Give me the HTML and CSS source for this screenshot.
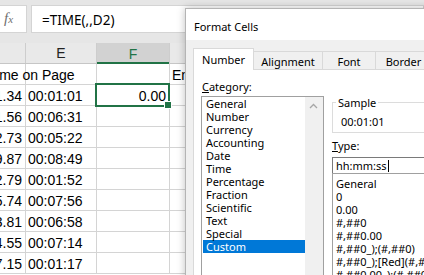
FILE: index.html
```html
<!DOCTYPE html>
<html lang="en">
<head>
<meta charset="UTF-8">
<title>Format Cells</title>
<link rel="stylesheet" href="styles.css">
</head>
<body>
<div class="formula-bar">
  <div class="fx-box"><span class="fx-f">f</span><span class="fx-x">x</span></div>
  <div class="formula-input">=TIME(,,D2)</div>
</div>

<div class="sheet">
  <div class="row col-heads">
    <div class="cell"></div>
    <div class="cell">E</div>
    <div class="cell col-selected">F</div>
    <div class="cell"></div>
  </div>
  <div class="row">
    <div class="cell">Time on Page</div>
    <div class="cell"></div>
    <div class="cell"></div>
    <div class="cell">Engagement</div>
  </div>
  <div class="row">
    <div class="cell num">31.34</div>
    <div class="cell">00:01:01</div>
    <div class="cell num active">0.00</div>
    <div class="cell"></div>
  </div>
  <div class="row">
    <div class="cell num">51.56</div>
    <div class="cell">00:06:31</div>
    <div class="cell"></div>
    <div class="cell"></div>
  </div>
  <div class="row">
    <div class="cell num">42.73</div>
    <div class="cell">00:05:22</div>
    <div class="cell"></div>
    <div class="cell"></div>
  </div>
  <div class="row">
    <div class="cell num">29.87</div>
    <div class="cell">00:08:49</div>
    <div class="cell"></div>
    <div class="cell"></div>
  </div>
  <div class="row">
    <div class="cell num">12.79</div>
    <div class="cell">00:01:52</div>
    <div class="cell"></div>
    <div class="cell"></div>
  </div>
  <div class="row">
    <div class="cell num">65.74</div>
    <div class="cell">00:07:56</div>
    <div class="cell"></div>
    <div class="cell"></div>
  </div>
  <div class="row">
    <div class="cell num">53.81</div>
    <div class="cell">00:06:58</div>
    <div class="cell"></div>
    <div class="cell"></div>
  </div>
  <div class="row">
    <div class="cell num">24.55</div>
    <div class="cell">00:07:14</div>
    <div class="cell"></div>
    <div class="cell"></div>
  </div>
  <div class="row">
    <div class="cell num">17.15</div>
    <div class="cell">00:01:17</div>
    <div class="cell"></div>
    <div class="cell"></div>
  </div>
</div>

<div class="dialog">
  <div class="title-bar">Format Cells</div>
  <div class="dialog-body">
    <div class="tabs">
      <div class="tab tab-active">Number</div>
      <div class="tab tab-align">Alignment</div>
      <div class="tab tab-font">Font</div>
      <div class="tab tab-border">Border</div>
    </div>
    <div class="tab-panel">
      <div class="category">
        <div class="field-label"><u>C</u>ategory:</div>
        <div class="listbox">
          <ul class="list-items">
            <li>General</li>
            <li>Number</li>
            <li>Currency</li>
            <li>Accounting</li>
            <li>Date</li>
            <li>Time</li>
            <li>Percentage</li>
            <li>Fraction</li>
            <li>Scientific</li>
            <li>Text</li>
            <li>Special</li>
            <li class="selected">Custom</li>
          </ul>
          <div class="scrollbar">
            <svg class="arrow-up" width="9" height="6" viewBox="0 0 9 6">
              <polyline points="1,5 4.5,1.5 8,5" fill="none" stroke="#a6a6a6" stroke-width="1.3"/>
            </svg>
          </div>
        </div>
      </div>

      <div class="format-side">
        <fieldset class="sample">
          <legend>Sample</legend>
          <div class="sample-value">00:01:01</div>
        </fieldset>
        <div class="field-label type-label"><u>T</u>ype:</div>
        <div class="type-input">hh:mm:ss<span class="caret"></span></div>
        <ul class="type-list">
          <li>General</li>
          <li>0</li>
          <li>0.00</li>
          <li>#,##0</li>
          <li>#,##0.00</li>
          <li>#,##0_);(#,##0)</li>
          <li>#,##0_);[Red](#,##0)</li>
          <li>#,##0.00_);(#,##0.00)</li>
        </ul>
      </div>
    </div>
  </div>
</div>
</body>
</html>
```

FILE: styles.css
```css
* {
  box-sizing: border-box;
}

body {
  margin: 0;
  width: 424px;
  height: 275px;
  overflow: hidden;
  position: relative;
  background-color: #fff;
  font-family: "Liberation Sans", Arial, sans-serif;
  color: #000;
}

/* formula bar */

.formula-bar {
  display: flex;
  height: 43px;
  padding: 5px 0 10px;
  background-color: #e6e6e6;
}

.fx-box {
  width: 28px;
  margin-left: -1px;
  background-color: #fff;
  border: 1px solid #d4d4d4;
  padding: 3px 0 0 4px;
  color: #6f6f6f;
  font-family: "Liberation Serif", serif;
  font-style: italic;
}

.fx-f {
  font-size: 15px;
}

.fx-x {
  font-size: 11px;
}

.formula-input {
  flex: 1;
  margin-left: 4px;
  background-color: #fff;
  border: 1px solid #d4d4d4;
  padding: 4px 0 0 10px;
  font-family: "Noto Sans", sans-serif;
  font-size: 13.5px;
  line-height: 20px;
}

/* sheet grid */

.sheet {
  margin-left: -14px;
}

.row {
  display: grid;
  grid-template-columns: 40px 71px 73px 1fr;
  height: 21px;
  border-bottom: 1px solid #d4d4d4;
}

.cell {
  display: flex;
  align-items: flex-end;
  padding: 0 2px 1px;
  border-right: 1px solid #d4d4d4;
  white-space: nowrap;
  min-width: 0;
  font-size: 14px;
  line-height: 16px;
}

.num {
  justify-content: flex-end;
  padding-right: 3px;
}

.col-heads {
  background-color: #e9e9e9;
  border-bottom-color: #c6c6c6;
}

.col-heads .cell {
  justify-content: center;
  align-items: center;
  padding: 0;
  border-right-color: #cdcdcd;
  color: #222;
}

.col-heads .col-selected {
  margin-bottom: -1px;
  background-color: #d2d2d2;
  color: #217346;
  box-shadow: inset 0 -2px 0 #217346;
}

.active {
  position: relative;
}

.active::after {
  content: "";
  position: absolute;
  top: -2px;
  left: -2px;
  right: -1px;
  bottom: -2px;
  border: 2px solid #217346;
}

.active::before {
  content: "";
  position: absolute;
  right: -3px;
  bottom: -4px;
  width: 6px;
  height: 6px;
  background-color: #217346;
  border: 1px solid #fff;
  z-index: 1;
}

/* dialog */

.dialog {
  position: absolute;
  left: 185px;
  top: 8px;
  width: 260px;
  height: 280px;
  border: 1px solid #b4b4b4;
  background-color: #f0f0f0;
  box-shadow: 0 0 8px rgba(0, 0, 0, 0.25);
  font-family: "Noto Sans", sans-serif;
  font-size: 11px;
}

.title-bar {
  height: 31px;
  padding: 7px 0 0 8px;
  line-height: 22px;
  background-color: #fff;
}

.dialog-body {
  padding: 8px 0 0 7px;
}

.tabs {
  display: flex;
  align-items: flex-end;
  height: 21px;
}

.tab {
  height: 18px;
  padding-top: 2px;
  line-height: 15px;
  text-align: center;
  border-top: 1px solid #d9d9d9;
  border-right: 1px solid #d9d9d9;
  flex-shrink: 0;
}

.tab-active {
  width: 61px;
  height: 22px;
  margin-bottom: -1px;
  padding-top: 3px;
  border-left: 1px solid #d9d9d9;
  background-color: #fff;
  position: relative;
  z-index: 1;
}

.tab-align {
  width: 69px;
}

.tab-font {
  width: 53px;
}

.tab-border {
  width: 56px;
}

.tab-panel {
  display: flex;
  height: 220px;
  padding-left: 7px;
  background-color: #fff;
  border: 1px solid #d9d9d9;
}

.category {
  width: 123px;
  flex-shrink: 0;
  padding-top: 10px;
}

.field-label {
  line-height: 13px;
  padding-left: 1px;
  margin-bottom: 3px;
}

.listbox {
  display: flex;
  height: 200px;
  border: 1px solid #a0a0a0;
}

.list-items {
  width: 103px;
  margin: 0;
  padding: 0 0 0 1px;
  list-style: none;
}

.list-items li {
  height: 13px;
  line-height: 13px;
  padding-left: 3px;
}

.list-items .selected {
  background-color: #0078d7;
  color: #fff;
}

.scrollbar {
  width: 18px;
  background-color: #f0f0f0;
}

.arrow-up {
  display: block;
  margin: 6px 0 0 4px;
}

.format-side {
  width: 200px;
  flex-shrink: 0;
  margin-left: 8px;
}

.sample {
  margin: 26px 0 0;
  padding: 0 0 4px 8px;
  border: 1px solid #dcdcdc;
  min-width: 0;
}

.sample legend {
  padding: 0 2px;
  margin-left: -5px;
  line-height: 13px;
}

.sample-value {
  margin-top: 6px;
  line-height: 13px;
}

.type-label {
  margin: 6px 0 5px;
  padding-left: 0;
}

.type-input {
  height: 17px;
  padding-left: 3px;
  line-height: 15px;
  border: 1px solid #7a7a7a;
  display: flex;
  align-items: center;
}

.caret {
  width: 1px;
  height: 12px;
  margin-left: 1px;
  background-color: #000;
}

.type-list {
  margin: -1px 0 0;
  padding: 3px 0 0 3px;
  height: 120px;
  list-style: none;
  border: 1px solid #a0a0a0;
}

.type-list li {
  height: 13px;
  line-height: 13px;
}
```
